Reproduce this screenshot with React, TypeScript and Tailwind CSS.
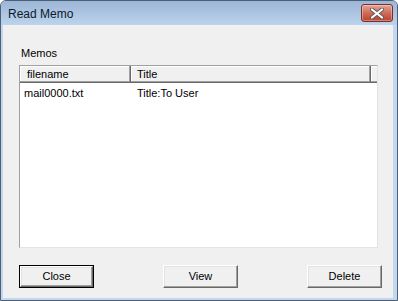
import React from "react";

function Btn({ label, def }: { label: string; def?: boolean }) {
  const inner = (
    <div className="flex h-full w-full items-center justify-center border border-t-[#ffffff] border-l-[#ffffff] border-r-[#696969] border-b-[#696969] bg-[#f0f0f0] shadow-[inset_-1px_-1px_#a0a0a0,inset_1px_1px_#e3e3e3] text-[11px] text-black">
      {label}
    </div>
  );
  return (
    <div className={"h-[23px] w-[75px] " + (def ? "border border-black" : "")}>{inner}</div>
  );
}

export default function App() {
  return (
    <div
      className="w-[398px] h-[301px] border border-[#4c5f78] rounded-t-[6px] overflow-hidden flex flex-col bg-[#c3d7ee]"
      style={{ fontFamily: '"Liberation Sans", Arial, sans-serif' }}
    >
      <div className="h-[24px] flex items-center justify-between pl-[7px] pr-[4px] bg-gradient-to-b from-[#9cb6d6] to-[#bdd3ec] shrink-0">
        <span className="text-[12px] text-[#0b1a2e] mt-[1px]">Read Memo</span>
        <div className="h-[18px] w-[32px] rounded-[3px] border border-[#7a2e25] bg-gradient-to-b from-[#e5a497] via-[#cf6b58] to-[#b9412e] flex items-center justify-center shadow-[inset_0_0_0_1px_rgba(255,255,255,0.35)]">
          <svg width="14" height="11" viewBox="0 0 14 11">
            <path d="M2 1.5 L12 9.5 M12 1.5 L2 9.5" stroke="#5a5a5a" strokeWidth="4" strokeLinecap="round" />
            <path d="M2 1.5 L12 9.5 M12 1.5 L2 9.5" stroke="#ffffff" strokeWidth="2.2" strokeLinecap="round" />
          </svg>
        </div>
      </div>
      <div className="flex-1 pl-[2px] pr-[4px] pb-[2px] flex">
        <div className="flex-1 bg-[#f0f0f0] flex flex-col pl-[16px] pt-[22px] text-[11px] text-black">
          <div className="ml-[2px] h-[13px] leading-[13px]">Memos</div>
          <div className="mt-[5px] h-[183px] w-[359px] border border-t-[#a0a0a0] border-l-[#a0a0a0] border-r-[#e3e3e3] border-b-[#e3e3e3] bg-white flex flex-col">
            <div className="flex h-[17px] shrink-0">
              <div className="w-[111px] border-r border-b border-r-[#696969] border-b-[#696969] bg-[#f0f0f0] shadow-[inset_-1px_-1px_#a0a0a0,inset_1px_1px_#ffffff] pl-[7px] leading-[17px]">
                filename
              </div>
              <div className="w-[240px] border-r border-b border-r-[#696969] border-b-[#696969] bg-[#f0f0f0] shadow-[inset_-1px_-1px_#a0a0a0,inset_1px_1px_#ffffff] pl-[6px] leading-[17px]">
                Title
              </div>
              <div className="flex-1 border-b border-b-[#696969] bg-[#f0f0f0] shadow-[inset_0_-1px_#a0a0a0,inset_1px_1px_#ffffff]" />
            </div>
            <div className="flex h-[18px] leading-[18px] mt-[1px]">
              <div className="w-[111px] pl-[4px]">mail0000.txt</div>
              <div className="pl-[6px]">Title:To User</div>
            </div>
          </div>
          <div className="mt-[17px] flex gap-[69px]">
            <Btn label="Close" def />
            <Btn label="View" />
            <Btn label="Delete" />
          </div>
        </div>
      </div>
    </div>
  );
}
